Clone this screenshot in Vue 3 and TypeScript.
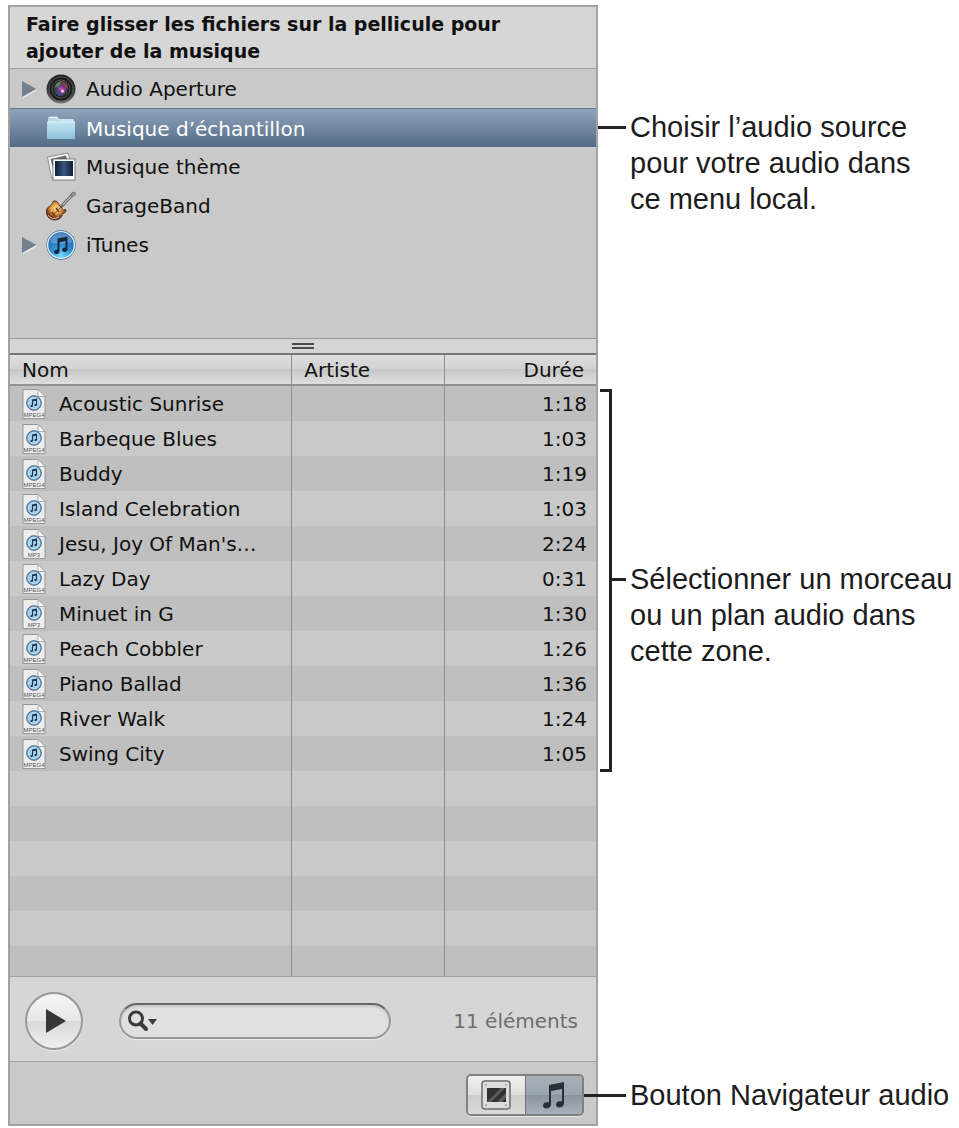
<script setup lang="ts">
import { computed, ref } from 'vue'

type SourceIcon = 'aperture' | 'folder' | 'photos' | 'guitar' | 'itunes'

interface Source {
  name: string
  icon: SourceIcon
  expandable: boolean
}

interface Track {
  name: string
  artist: string
  duration: string
  format: 'MPEG4' | 'MP3'
}

const sources: Source[] = [
  { name: 'Audio Aperture', icon: 'aperture', expandable: true },
  { name: 'Musique d’échantillon', icon: 'folder', expandable: false },
  { name: 'Musique thème', icon: 'photos', expandable: false },
  { name: 'GarageBand', icon: 'guitar', expandable: false },
  { name: 'iTunes', icon: 'itunes', expandable: true },
]

const tracks: Track[] = [
  { name: 'Acoustic Sunrise', artist: '', duration: '1:18', format: 'MPEG4' },
  { name: 'Barbeque Blues', artist: '', duration: '1:03', format: 'MPEG4' },
  { name: 'Buddy', artist: '', duration: '1:19', format: 'MPEG4' },
  { name: 'Island Celebration', artist: '', duration: '1:03', format: 'MPEG4' },
  { name: "Jesu, Joy Of Man's…", artist: '', duration: '2:24', format: 'MP3' },
  { name: 'Lazy Day', artist: '', duration: '0:31', format: 'MPEG4' },
  { name: 'Minuet in G', artist: '', duration: '1:30', format: 'MP3' },
  { name: 'Peach Cobbler', artist: '', duration: '1:26', format: 'MPEG4' },
  { name: 'Piano Ballad', artist: '', duration: '1:36', format: 'MPEG4' },
  { name: 'River Walk', artist: '', duration: '1:24', format: 'MPEG4' },
  { name: 'Swing City', artist: '', duration: '1:05', format: 'MPEG4' },
]

const fillerRows = 6
const selected = ref('Musique d’échantillon')
const query = ref('')
const browser = ref<'photo' | 'audio'>('audio')

const visibleTracks = computed(() =>
  tracks.filter((t) => t.name.toLowerCase().includes(query.value.toLowerCase())),
)
</script>

<template>
  <main class="page">
    <section class="panel sources">
      <h1 class="title">Faire glisser les fichiers sur la pellicule pour<br />ajouter de la musique</h1>
      <ul class="source-list">
        <li
          v-for="source in sources"
          :key="source.name"
          class="source"
          :class="{ selected: source.name === selected }"
        >
          <button v-if="source.expandable" class="disclosure" type="button" :aria-label="`Développer ${source.name}`">
            <svg width="16" height="18" viewBox="0 0 16 18">
              <path d="M1 2.500L15.500 10L1 18Z" fill="#eeeeee" />
              <path d="M0 1L14.500 9L0 17Z" fill="#74818d" />
            </svg>
          </button>
          <span v-else class="disclosure"></span>
          <button class="source-name" type="button" @click="selected = source.name">
            <svg v-if="source.icon === 'aperture'" class="icon" viewBox="0 0 30 30">
              <defs>
                <radialGradient id="lens">
                  <stop offset="0" stop-color="#d65fb0" />
                  <stop offset=".35" stop-color="#713a84" />
                  <stop offset=".7" stop-color="#273f3a" />
                  <stop offset="1" stop-color="#111116" />
                </radialGradient>
                <linearGradient id="lens-rim" x2="0" y2="1">
                  <stop offset="0" stop-color="#242424" />
                  <stop offset=".6" stop-color="#3d3b3b" />
                  <stop offset="1" stop-color="#777575" />
                </linearGradient>
              </defs>
              <circle cx="15" cy="15" r="14.500" fill="url(#lens-rim)" />
              <circle cx="15" cy="15" r="12" fill="#1b1a1c" stroke="#5c5a5a" stroke-width=".8" />
              <circle cx="15" cy="15" r="9" fill="url(#lens)" stroke="#69656a" stroke-width=".8" />
              <path d="M9 14C9 10 12 7 16 7L13 12Z" fill="#6c9c62" opacity=".75" />
              <path d="M16 7C20 8 22 11 22 15L17 11Z" fill="#a84350" opacity=".8" />
              <path d="M9 17L14 17L17 22C13 23 10 21 9 17Z" fill="#3e4992" opacity=".8" />
              <path d="M15 15L20 13L19 19L15 21Z" fill="#9c3b9e" opacity=".8" />
              <circle cx="16.500" cy="17" r="1.600" fill="#ffc4f0" />
            </svg>
            <svg v-else-if="source.icon === 'folder'" class="icon" viewBox="0 0 30 30">
              <defs>
                <linearGradient id="folder-front" x2="0" y2="1">
                  <stop offset="0" stop-color="#c4e4f4" />
                  <stop offset=".5" stop-color="#a9d3e8" />
                  <stop offset="1" stop-color="#8bbcd6" />
                </linearGradient>
              </defs>
              <path d="M2 9V5.500Q2 3.500 4 3.500H11Q12.500 3.500 12.500 6H27Q28 6 28 7.500V10H2Z" fill="#b7d6e6" />
              <path d="M3.500 4.500H11L12 7H27" fill="none" stroke="#e4f4fb" />
              <rect x="1" y="8.500" width="28" height="18" rx="1" fill="url(#folder-front)" />
              <path d="M1.500 9H28.500" stroke="#dff2fa" />
              <path d="M1.500 26.500H28.500" stroke="#587d98" />
            </svg>
            <svg v-else-if="source.icon === 'photos'" class="icon" viewBox="0 0 30 30">
              <defs>
                <linearGradient id="photo-sky">
                  <stop offset="0" stop-color="#111d37" />
                  <stop offset=".5" stop-color="#37577f" />
                  <stop offset="1" stop-color="#111d37" />
                </linearGradient>
              </defs>
              <path d="M1.500 5L22 1L24 8L8 26H5.500Z" fill="#f5f5f2" stroke="#777" stroke-width=".8" />
              <path d="M4.500 7L20 3.500L21 7H8V20Z" fill="#676966" />
              <rect x="7" y="7" width="22" height="21" fill="#fafafa" stroke="#696969" stroke-width=".8" />
              <rect x="9" y="9" width="18" height="15" fill="url(#photo-sky)" />
            </svg>
            <svg v-else-if="source.icon === 'guitar'" class="icon" viewBox="0 0 30 30">
              <defs>
                <radialGradient id="sunburst" cx=".5" cy=".4">
                  <stop offset="0" stop-color="#ffd88a" />
                  <stop offset=".6" stop-color="#dd9440" />
                  <stop offset="1" stop-color="#713215" />
                </radialGradient>
              </defs>
              <path d="M15 16L26 4" stroke="#5d5850" stroke-width="2.800" />
              <path d="M15 16L26 4" stroke="#c4bbab" stroke-width="1.200" />
              <path d="M25 4Q25 1 28 1Q31 2 29 4L26 6Z" fill="#9a9792" stroke="#555" stroke-width=".6" />
              <path d="M9 10C6 9 7 14 4 15C0 17 0 20 1 24C3 29 9 30 13 28C17 26 15 23 18 22C21 21 20 17 18 19C16 20 17 17 14 15C12 13 12 10 9 10Z" fill="url(#sunburst)" stroke="#4f2815" stroke-width=".9" />
              <path d="M6 21L9 25M10 17L13 21" stroke="#5a3a20" stroke-width="1.300" />
              <path d="M8 23L17 14" stroke="#6b4a2c" stroke-width=".8" />
              <path d="M2 24Q6 30 13 26" fill="none" stroke="#efe4d2" stroke-width=".8" />
            </svg>
            <svg v-else class="icon" viewBox="0 0 30 30">
              <defs>
                <radialGradient id="disc" cx=".5" cy=".9" r=".9">
                  <stop offset="0" stop-color="#74dcfb" />
                  <stop offset=".45" stop-color="#2c8cd2" />
                  <stop offset="1" stop-color="#1f559e" />
                </radialGradient>
              </defs>
              <circle cx="15" cy="15" r="14.700" fill="#476e91" />
              <circle cx="15" cy="15" r="13.400" fill="url(#disc)" stroke="#d7edf8" stroke-width="1.400" />
              <path d="M4 12Q5 3 15 3T26 12Q15 16 4 12Z" fill="#a1ceee" opacity=".4" />
              <path d="M11.500 8.500L21.500 6.500V19Q21.500 22 18.500 22Q16 22 16 20Q16 17.500 19.500 17.500V11L13.500 12.200V21Q13.500 24 10.500 24Q8 24 8 22Q8 19.500 11.500 19.500Z" fill="#102739" />
            </svg>
            <span>{{ source.name }}</span>
          </button>
        </li>
      </ul>
      <div class="splitter" role="separator"><span class="grip"></span></div>
    </section>
    <aside class="callout callout-source">
      <span class="line"></span>
      <p>
        <span>Choisir l’audio source</span>
        <span>pour votre audio dans</span>
        <span>ce menu local.</span>
      </p>
    </aside>

    <section class="panel">
      <table class="tracks">
        <colgroup>
          <col class="col-name" />
          <col class="col-artist" />
          <col />
        </colgroup>
        <thead>
          <tr>
            <th scope="col">Nom</th>
            <th scope="col">Artiste</th>
            <th scope="col">Durée</th>
          </tr>
        </thead>
        <tbody>
          <tr v-for="track in visibleTracks" :key="track.name">
            <td>
              <div class="track">
                <svg class="file" viewBox="0 0 24 30">
                  <path d="M1 .5H16L23 7.500V29.500H1Z" fill="#ededed" stroke="#979797" />
                  <path d="M16 .5V7.500H23Z" fill="#fff" stroke="#aaa" />
                  <circle cx="12" cy="14" r="7.300" fill="#78a9cd" stroke="#40698e" />
                  <circle cx="12" cy="14" r="5.700" fill="#a2cce6" stroke="#d9edf7" stroke-width=".7" />
                  <path d="M10 10.500L15 9.500V15.500Q15 17 13.500 17T12.300 16T14 14.700V11.700L11 12.300V16.500Q11 18 9.500 18T8.300 17T10 15.700Z" fill="#173854" />
                  <text x="12" y="28" text-anchor="middle">{{ track.format }}</text>
                </svg>
                <span>{{ track.name }}</span>
              </div>
            </td>
            <td>{{ track.artist }}</td>
            <td>{{ track.duration }}</td>
          </tr>
          <tr v-for="n in fillerRows" :key="n" class="filler" aria-hidden="true">
            <td></td>
            <td></td>
            <td></td>
          </tr>
        </tbody>
      </table>
    </section>
    <aside class="callout callout-tracks">
      <span class="bracket"></span>
      <span class="line"></span>
      <p>
        <span>Sélectionner un morceau</span>
        <span>ou un plan audio dans</span>
        <span>cette zone.</span>
      </p>
    </aside>

    <section class="panel">
      <div class="player">
        <button class="play" type="button" aria-label="Lire">
          <svg width="20" height="24" viewBox="0 0 20 24"><path d="M0 0L20 12L0 24Z" fill="#373737" /></svg>
        </button>
        <label class="search">
          <svg width="32" height="22" viewBox="0 0 32 22">
            <circle cx="9" cy="8.500" r="6.500" fill="none" stroke="#3b3b3b" stroke-width="3" />
            <path d="M13.500 13.500L19 19" stroke="#3b3b3b" stroke-width="4" stroke-linecap="round" />
            <path d="M21 9H30L25.500 15Z" fill="#3b3b3b" />
          </svg>
          <input v-model="query" type="text" aria-label="Rechercher" />
        </label>
        <span class="count">{{ visibleTracks.length }} éléments</span>
      </div>
      <div class="toolbar">
        <div class="segmented">
          <button type="button" :class="{ active: browser === 'photo' }" aria-label="Navigateur photo" @click="browser = 'photo'">
            <svg width="30" height="30" viewBox="0 0 30 30">
              <rect x="1" y="1" width="28" height="28" rx="3" fill="#dcdcdc" stroke="#6c6c6c" stroke-width="1.500" />
              <g fill="#a0a0a0">
                <circle cx="5" cy="5" r="1" />
                <circle cx="25" cy="5" r="1" />
                <circle cx="5" cy="25" r="1" />
                <circle cx="25" cy="25" r="1" />
              </g>
              <rect x="6" y="8" width="19" height="14" fill="#303030" />
              <path d="M6 22L20 8H24L10 22ZM16 22L25 13V18L21 22Z" fill="#5c5c5c" />
            </svg>
          </button>
          <button type="button" :class="{ active: browser === 'audio' }" aria-label="Navigateur audio" @click="browser = 'audio'">
            <svg width="24" height="28" viewBox="0 0 24 28">
              <path d="M7 4L22 1V22Q22 26 17.500 26.500Q14 26.500 14 23.500Q14 20.500 18 20Q19 20 20 20.500V8L9 10V23Q9 27 4.500 27.500Q1 27.500 1 24.500Q1 21.500 5 21Q6 21 7 21.500Z" fill="#2b2f35" />
            </svg>
          </button>
        </div>
      </div>
    </section>
    <aside class="callout callout-button">
      <span class="line"></span>
      <p><span>Bouton Navigateur audio</span></p>
    </aside>
  </main>
</template>

<style>
body {
  margin: 0;
  background: #fff;
}
</style>

<style scoped>
.page {
  display: grid;
  grid-template-columns: minmax(0, 590fr) minmax(0, 353fr);
  padding: 5px 8px 0;
  font-family: 'Lucida Grande', 'DejaVu Sans', sans-serif;
  font-size: 20px;
  line-height: 27px;
  color: #111;
}

button {
  padding: 0;
  border: 0;
  background: none;
  font: inherit;
  color: inherit;
}

svg {
  display: block;
  flex: none;
}

.panel {
  box-sizing: border-box;
  border: solid #a2a2a2;
  border-width: 0 2px;
  background: #c9c9c9;
}

.sources {
  display: flex;
  flex-direction: column;
  border-top-width: 2px;
}

.title {
  margin: 0;
  padding: 4px 16px 3px;
  border-bottom: 1px solid #9c9c9c;
  background: #d6d6d6;
  font-size: 19px;
  line-height: 27px;
  white-space: nowrap;
}

.source-list {
  flex: 1;
  min-height: 269px;
  margin: 0;
  padding: 0;
  list-style: none;
}

.source {
  box-sizing: border-box;
  display: flex;
  align-items: center;
  height: 39px;
  padding-left: 12px;
}

.source.selected {
  border-top: 1px solid #64788c;
  background: linear-gradient(#8fa3bc, #536b85);
  color: #fff;
}

.disclosure {
  width: 16px;
  margin-right: 8px;
}

.source-name {
  display: flex;
  flex: 1;
  align-items: center;
  gap: 10px;
  text-align: left;
}

.source-name span,
.track span {
  padding-top: 2px;
}

.icon {
  width: 30px;
  height: 30px;
}

.splitter {
  display: flex;
  align-items: center;
  justify-content: center;
  height: 14px;
  border-top: 1px solid #999;
  border-bottom: 2px solid #777;
  background: #d5d5d5;
}

.grip {
  width: 22px;
  height: 2px;
  border: solid #4b4b4b;
  border-width: 2px 0;
}

.tracks {
  width: 100%;
  border-collapse: separate;
  border-spacing: 0;
  table-layout: fixed;
}

.col-name {
  width: 48%;
}

.col-artist {
  width: 26%;
}

th,
td {
  box-sizing: border-box;
  padding: 0 12px;
  text-align: left;
  font-weight: 400;
  white-space: nowrap;
}

th + th,
td + td {
  border-left: 1px solid #8f8f8f;
}

th {
  height: 31px;
  padding-top: 2px;
  border-bottom: 2px solid #929292;
  background: linear-gradient(#dedede, #d2d2d2 48%, #c7c7c7 50%, #dedede);
}

td {
  height: 35px;
}

th:last-child,
td:last-child {
  text-align: right;
}

td:last-child {
  padding-top: 2px;
  padding-right: 9px;
}

tbody tr:nth-child(odd) {
  background: #bfbfbf;
}

.filler:last-child td {
  height: 30px;
}

.track {
  display: flex;
  align-items: center;
  gap: 13px;
}

.file {
  width: 24px;
  height: 30px;
}

.file text {
  font-family: 'Liberation Sans', Arial, sans-serif;
  font-size: 6px;
  fill: #555;
}

.player {
  display: flex;
  align-items: center;
  height: 81px;
  padding: 3px 18px 0 15px;
  border: solid #a0a0a0;
  border-width: 1px 0;
  background: #d6d6d6;
}

.play {
  box-sizing: border-box;
  display: flex;
  align-items: center;
  justify-content: center;
  width: 58px;
  height: 58px;
  padding-left: 4px;
  border: 2px solid #999;
  border-radius: 50%;
  background: linear-gradient(#f6f6f6, #e6e6e6 50%, #d9d9d9 51%, #f0f0f0);
  box-shadow: 0 1px 1px #eee;
}

.search {
  box-sizing: border-box;
  display: flex;
  flex: 1;
  align-items: center;
  max-width: 272px;
  height: 36px;
  margin-left: 36px;
  padding: 0 16px 0 6px;
  border: 2px solid #999;
  border-top-color: #666;
  border-radius: 18px;
  background: #e0e0e0;
  box-shadow: inset 0 2px 2px #c6c6c6, 0 1px 1px #eee;
}

.search input {
  flex: 1;
  min-width: 0;
  padding: 0 4px;
  border: 0;
  outline: 0;
  background: none;
  font: inherit;
}

.count {
  margin-left: auto;
  padding-top: 2px;
  color: #6d6d6d;
}

.toolbar {
  box-sizing: border-box;
  display: flex;
  justify-content: flex-end;
  height: 64px;
  padding: 12px 12px 0;
  border-bottom: 2px solid #a2a2a2;
}

.segmented {
  box-sizing: border-box;
  display: flex;
  width: 118px;
  height: 42px;
  overflow: hidden;
  border: 2px solid #808080;
  border-radius: 5px;
  box-shadow: 0 1px 1px #e8e8e8;
}

.segmented button {
  display: flex;
  flex: 1;
  align-items: center;
  justify-content: center;
  background: linear-gradient(#f0f0f0, #dedede 50%, #cecece 51%, #dadada);
}

.segmented .active {
  border-left: 1px solid #6c7279;
  background: linear-gradient(#a7b0ba, #9ba5b0 50%, #8a949f 51%, #a7b0bb);
}

.callout {
  display: flex;
  align-items: flex-start;
  font-family: 'Liberation Sans', Arial, sans-serif;
  font-size: 29px;
  line-height: 36px;
  color: #1c1c1c;
}

.callout p {
  margin: 0 0 0 4px;
}

.callout p span {
  display: block;
  white-space: nowrap;
}

.line {
  flex: none;
  width: 28px;
  height: 3px;
  margin-top: 17px;
  background: #222;
}

.callout-source {
  padding-top: 104px;
}

.callout-tracks {
  padding-top: 34px;
}

.bracket {
  box-sizing: border-box;
  flex: none;
  width: 12px;
  height: 383px;
  margin-left: 2px;
  border: 3px solid #222;
  border-left: 0;
}

.callout-tracks .line {
  width: 14px;
  margin-top: 189px;
}

.callout-tracks p {
  margin-top: 172px;
}

.callout-button {
  padding-top: 101px;
}

.callout-button .line {
  width: 42px;
  margin-left: -14px;
}
</style>
